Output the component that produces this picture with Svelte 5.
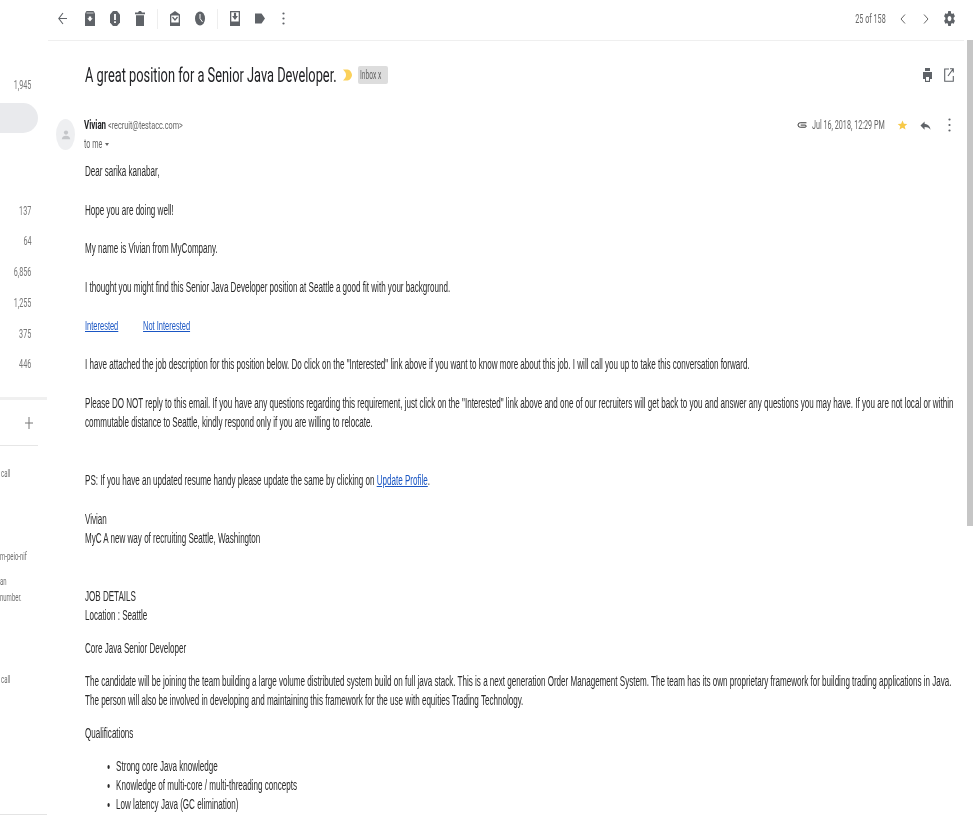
<script>
  const counts = ['137', '64', '6,856', '1,255', '375', '446'];
</script>

<div class="page">
  <aside class="side">
    <div class="inbox-count"><span class="sq">1,945</span></div>
    <div class="active"></div>
    <div class="counts">
      {#each counts as c}
        <div class="count"><span class="sq">{c}</span></div>
      {/each}
    </div>
    <div class="rule"></div>
    <div class="plus">
      <svg viewBox="0 0 8 12"><path d="M4 0v12M0 6h8" stroke="#777" stroke-width="1" fill="none"/></svg>
    </div>
    <div class="rule-thin"></div>
    <div class="chat c1"><span class="sq">call</span></div>
    <div class="chat c2"><span class="sq">m-peio-nif</span></div>
    <div class="chat c3"><span class="sq">an</span></div>
    <div class="chat c4"><span class="sq">number.</span></div>
    <div class="chat c5"><span class="sq">call</span></div>
    <div class="bottom-rule"></div>
  </aside>

  <main class="main">
    <header class="toolbar">
      <div class="tools">
        <svg class="ico back" viewBox="0 0 9 13"><path d="M9 6.500H1M5 1 .8 6.500 5 12" fill="none" stroke="#5f6368" stroke-width="1.100"/></svg>
        <svg class="ico" viewBox="0 0 10 15"><path d="M1.500 0h7L10 2.500V15H0V2.500z" fill="#5f6368"/><path d="M1.500 2h7" stroke="#fff" stroke-width=".7"/><path d="M5 10.500 2.300 7.300h1.500V5.500h2.400v1.800h1.500z" fill="#fff"/></svg>
        <svg class="ico" viewBox="0 0 10 15"><path d="M3 0h4l3 3.500v8L7 15H3l-3-3.500v-8z" fill="#5f6368"/><path d="M4.100 3h1.800v6H4.100zM4.100 10.300h1.800V12H4.100z" fill="#fff"/></svg>
        <svg class="ico" viewBox="0 0 10 15"><path d="M0 1.500h3L4 0h2l1 1.500h3v1.800H0zM1 4.200h8V15H1z" fill="#5f6368"/></svg>
        <i class="sep"></i>
        <svg class="ico" viewBox="0 0 10 15"><path d="M5 0l5 3.500V15H0V3.500z" fill="#5f6368"/><path d="M1.300 4.500h7.400v7H1.300z" fill="#fff"/><path d="M2.500 6 5 9l2.500-3" fill="none" stroke="#5f6368" stroke-width="1.200"/></svg>
        <svg class="ico" viewBox="0 0 10 15"><ellipse cx="5" cy="7.500" rx="5" ry="7" fill="#5f6368"/><path d="M5 3v4.500l2.500 3.500" fill="none" stroke="#fff" stroke-width="1"/></svg>
        <i class="sep"></i>
        <svg class="ico" viewBox="0 0 10 15"><path d="M0 0h10v15H0z" fill="#5f6368"/><path d="M1.300 1.300h7.400v9.200H1.300z" fill="#fff"/><path d="M3.900 1.800h2.200v3.200h1.800L5 9 2.100 5h1.800z" fill="#5f6368"/></svg>
        <svg class="ico tag-ico" viewBox="0 0 10 11"><path d="M0 .5h6.500L10 5.500l-3.500 5H0z" fill="#5f6368"/></svg>
        <svg class="ico dots" viewBox="0 0 3 13"><circle cx="1.500" cy="1.500" r="1.100" fill="#5f6368"/><circle cx="1.500" cy="6.500" r="1.100" fill="#5f6368"/><circle cx="1.500" cy="11.500" r="1.100" fill="#5f6368"/></svg>
      </div>
      <div class="pager">
        <span class="sq count-page">25 of 158</span>
        <svg class="chev" viewBox="0 0 8 12"><path d="M6 1.500 2 6l4 4.500" fill="none" stroke="#666" stroke-width="1"/></svg>
        <svg class="chev" viewBox="0 0 8 12"><path d="M2 1.500 6 6l-4 4.500" fill="none" stroke="#666" stroke-width="1"/></svg>
        <svg class="gear" viewBox="2 2 20 20" preserveAspectRatio="none"><path fill="#5f6368" d="M19.400 13c.04-.3.100-.7.100-1s-.06-.7-.1-1l2.100-1.600c.2-.150.250-.4.120-.640l-2-3.460c-.12-.220-.39-.300-.61-.220l-2.490 1c-.520-.400-1.080-.730-1.690-.980l-.38-2.650A.49.490 0 0 0 14 2h-4a.49.490 0 0 0-.49.420l-.38 2.650c-.61.250-1.170.590-1.690.980l-2.490-1a.5.5 0 0 0-.61.220l-2 3.460c-.13.220-.07.490.12.640L4.600 11c-.04.320-.1.660-.1 1s.06.680.1 1l-2.100 1.650c-.19.150-.25.420-.12.640l2 3.460c.12.220.39.300.61.220l2.490-1c.520.400 1.080.730 1.690.980l.38 2.650c.03.240.24.420.49.420h4c.250 0 .460-.18.490-.42l.38-2.650c.61-.25 1.170-.59 1.690-.98l2.490 1c.23.090.49 0 .61-.22l2-3.460a.5.500 0 0 0-.12-.64zM12 15.500a3.500 3.500 0 1 1 0-7 3.500 3.500 0 0 1 0 7z"/></svg>
      </div>
    </header>

    <div class="scroller">
      <div class="content">
        <div class="subject-row">
          <h1 class="subject"><span class="sq">A great position for a Senior Java Developer.</span></h1>
          <svg class="imp" viewBox="0 0 9 12"><path d="M0 .5h4.500C7 .5 9 4 9 6s-2 5.500-4.500 5.500H0C2 9.500 3 8 3 6S2 2.500 0 .5z" fill="#fbd15b"/></svg>
          <span class="tag"><span class="sq">Inbox x</span></span>
          <div class="subject-icons">
            <svg class="print" viewBox="0 0 9 14"><path d="M2 0h5v3H2zM0 4h9v7H7v3H2v-3H0z" fill="#5f6368"/><path d="M3 9h3v3.800H3z" fill="#fff"/></svg>
            <svg class="ext" viewBox="0 0 10 14"><path d="M5 1H.7v12.300h8.600V8M6 .7h3.300V4.500M9 1 4 8" fill="none" stroke="#5f6368" stroke-width="1.100"/></svg>
          </div>
        </div>

        <div class="sender-row">
          <div class="avatar">
            <svg viewBox="0 0 20 20"><circle cx="10" cy="6.500" r="3" fill="#c4c6c9"/><path d="M4 16c0-3.500 3-5 6-5s6 1.500 6 5z" fill="#c4c6c9"/></svg>
          </div>
          <div class="sender">
            <div class="from"><span class="sq"><b>Vivian</b> <span class="addr">&lt;recruit@testacc.com&gt;</span></span></div>
            <div class="tome"><span class="sq">to me</span><i class="caret"></i></div>
          </div>
          <div class="meta">
            <svg class="clip" viewBox="0 0 11 9"><path d="M10.500 2H3.500a2.500 2.500 0 0 0 0 5H9a1.200 1.200 0 0 0 0-2.400H4" fill="none" stroke="#333" stroke-width="1.100"/></svg>
            <span class="sq date">Jul 16, 2018, 12:29 PM</span>
            <svg class="star" viewBox="0 0 24 24"><path fill="#f7c948" d="m12 2 3 7 7.500.6-5.700 5 1.800 7.400L12 18l-6.600 4 1.800-7.400-5.700-5L9 9z"/></svg>
            <svg class="reply" viewBox="0 0 12 12"><path d="M5 1.500 .5 6 5 10.500V7.500c3 0 5 .8 6.500 3-.4-3.500-2.500-6-6.500-6.500z" fill="#5f6368"/></svg>
            <svg class="dots2" viewBox="0 0 3 14"><circle cx="1.500" cy="1.500" r="1.100" fill="#5f6368"/><circle cx="1.500" cy="7" r="1.100" fill="#5f6368"/><circle cx="1.500" cy="12.500" r="1.100" fill="#5f6368"/></svg>
          </div>
        </div>

        <div class="body-wrap">
          <div class="body">
            <p>Dear sarika kanabar,</p>
            <p>Hope you are doing well!</p>
            <p>My name is Vivian from MyCompany.</p>
            <p>I thought you might find this Senior Java Developer position at Seattle a good fit with your background.</p>
            <p class="links"><a href="#a">Interested</a><a href="#b">Not Interested</a></p>
            <p>I have attached the job description for this position below. Do click on the "Interested" link above if you want to know more about this job. I will call you up to take this conversation forward.</p>
            <p class="please">Please DO NOT reply to this email. If you have any questions regarding this requirement, just click on the "Interested" link above and one of our recruiters will get back to you and answer any questions you may have. If you are not local or within commutable distance to Seattle, kindly respond only if you are willing to relocate.</p>
            <p>PS: If you have an updated resume handy please update the same by clicking on <a href="#c">Update Profile</a>.</p>
            <p class="please">Vivian<br />MyC A new way of recruiting Seattle, Washington</p>
            <p class="tight">JOB DETAILS<br />Location : Seattle</p>
            <p class="tight">Core Java Senior Developer</p>
            <p class="tight">The candidate will be joining the team building a large volume distributed system build on full java stack. This is a next generation Order Management System. The team has its own proprietary framework for building trading applications in Java. The person will also be involved in developing and maintaining this framework for the use with equities Trading Technology.</p>
            <p class="tight">Qualifications</p>
            <ul>
              <li>Strong core Java knowledge</li>
              <li>Knowledge of multi-core / multi-threading concepts</li>
              <li>Low latency Java (GC elimination)</li>
            </ul>
          </div>
        </div>
      </div>
      <div class="scrollbar"><div class="thumb"></div></div>
    </div>
  </main>
</div>

<style>
  :global(body) { margin: 0; background: #fff; }
  .page { display: flex; width: 978px; height: 817px; overflow: hidden; font-family: Roboto, "Liberation Sans", sans-serif; color: #222; filter: blur(.3px); }
  .sq { display: inline-block; transform: scaleX(.6); transform-origin: right center; white-space: nowrap; }

  .side { width: 48px; flex: none; position: relative; font-size: 12px; color: #777; }
  .inbox-count { height: 20px; margin-top: 78px; padding-right: 17px; text-align: right; }
  .active { width: 38px; height: 30px; margin-top: 5px; background: #e9eaed; border-radius: 0 15px 15px 0; }
  .counts { margin-top: 62.500px; }
  .count { height: 30.800px; line-height: 30.800px; padding-right: 17px; text-align: right; }
  .rule { width: 47px; height: 3px; margin-top: 17px; background: #f0f0f0; }
  .plus { margin-top: 17px; height: 12px; padding-left: 25px; }
  .plus svg { display: block; width: 8px; height: 12px; }
  .rule-thin { width: 38px; height: 1px; margin-top: 16px; background: #e6e6e6; }
  .chat { position: absolute; left: 0; white-space: nowrap; font-size: 10px; color: #6f6f6f; line-height: 12px; }
  .chat .sq { transform-origin: left center; }
  .c1 { top: 468px; left: 1px; }
  .c2 { top: 551px; }
  .c3 { top: 576px; }
  .c4 { top: 592px; }
  .c5 { top: 674px; left: 1px; }
  .bottom-rule { position: absolute; top: 814px; left: 0; width: 47px; height: 1px; background: #e4e4e4; }

  .main { flex: 1; min-width: 0; display: flex; flex-direction: column; }
  .toolbar { height: 41px; flex: none; display: flex; align-items: center; justify-content: space-between; border-bottom: 1px solid #efefef; margin-right: 14px; padding: 0 9px 3px 10px; box-sizing: border-box; }
  .tools { display: flex; align-items: center; }
  .ico { width: 10px; height: 15px; flex: none; display: block; margin-right: 15px; }
  .back { width: 9px; height: 13px; margin-right: 18px; }
  .sep { width: 1px; height: 20px; background: #eee; margin: 0 12px 0 -3px; }
  .tag-ico { width: 10px; height: 11px; margin-right: 17px; }
  .dots { width: 3px; height: 13px; margin-right: 0; }
  .pager { display: flex; align-items: center; }
  .count-page { font-size: 12px; color: #666; margin-right: 13px; }
  .chev { width: 8px; height: 12px; margin-right: 15px; }
  .chev + .chev { margin-right: 14px; }
  .gear { width: 11px; height: 15px; }

  .scroller { flex: 1; display: flex; min-height: 0; }
  .content { flex: 1; min-width: 0; overflow: hidden; }
  .scrollbar { width: 6px; flex: none; margin-right: 5px; margin-top: -1px; }
  .thumb { height: 486px; background: #c6c6c6; }

  .subject-row { display: flex; align-items: center; height: 30px; margin-top: 19px; padding: 0 13px 0 37px; }
  .subject { margin: 0; font-size: 21px; font-weight: 400; color: #202124; width: 258px; flex: none; }
  .subject .sq { transform-origin: left center; transform: scaleX(.61); }
  .imp { width: 9px; height: 12px; margin-right: 6px; flex: none; }
  .tag { background: #ddd; color: #666; font-size: 12px; border-radius: 2px; width: 30px; height: 18px; line-height: 18px; overflow: hidden; padding-left: 2px; box-sizing: border-box; flex: none; }
  .tag .sq { transform-origin: left center; transform: scaleX(.56); }
  .subject-icons { margin-left: auto; display: flex; gap: 12px; }
  .print { width: 9px; height: 14px; }
  .ext { width: 10px; height: 14px; }

  .sender-row { display: flex; margin-top: 29px; height: 35px; padding: 0 16px 0 8px; }
  .avatar { width: 19px; height: 31px; border-radius: 50%; background: #eeeff1; display: flex; align-items: center; justify-content: center; flex: none; margin-right: 9px; }
  .avatar svg { width: 14px; height: 16px; }
  .sender { flex: 1; font-size: 12px; }
  .from { height: 12px; line-height: 12px; margin-bottom: 7px; }
  .from .sq { transform-origin: left center; transform: scaleX(.66); }
  .tome .sq { transform-origin: left center; transform: scaleX(.6); }
  .from b { font-weight: 700; color: #202124; }
  .addr { color: #666; font-size: 11px; }
  .tome { color: #666; position: relative; line-height: 12px; }
  .caret { position: absolute; left: 21px; top: 5px; border: 2.500px solid transparent; border-top: 3px solid #666; border-bottom: 0; }
  .meta { display: flex; align-items: center; height: 12px; font-size: 12px; color: #666; }
  .clip { width: 10px; height: 8px; margin-right: 5px; flex: none; }
  .date { width: 74px; margin-right: 11px; transform-origin: left center; }
  .star { width: 11px; height: 12px; margin-right: 12px; flex: none; }
  .reply { width: 11px; height: 11px; margin-right: 17px; flex: none; }
  .dots2 { width: 3px; height: 14px; flex: none; }

  .body-wrap { margin-top: 8px; padding-left: 37px; height: 660px; overflow: hidden; }
  .body { width: 1520px; transform: scaleX(.5757); transform-origin: left top; font-family: "Liberation Sans", Arial, sans-serif; font-size: 14px; line-height: 19.300px; color: #2a2a2a; }
  .body p { margin: 0 0 19.300px; }
  .body p.please { margin-bottom: 38.800px; }
  .body p.tight { margin-bottom: 13.500px; }
  .links a { margin-right: 43px; font-size: 13px; }
  a { color: #1a56c4; }
  ul { margin: 0; padding-left: 54px; }
</style>
